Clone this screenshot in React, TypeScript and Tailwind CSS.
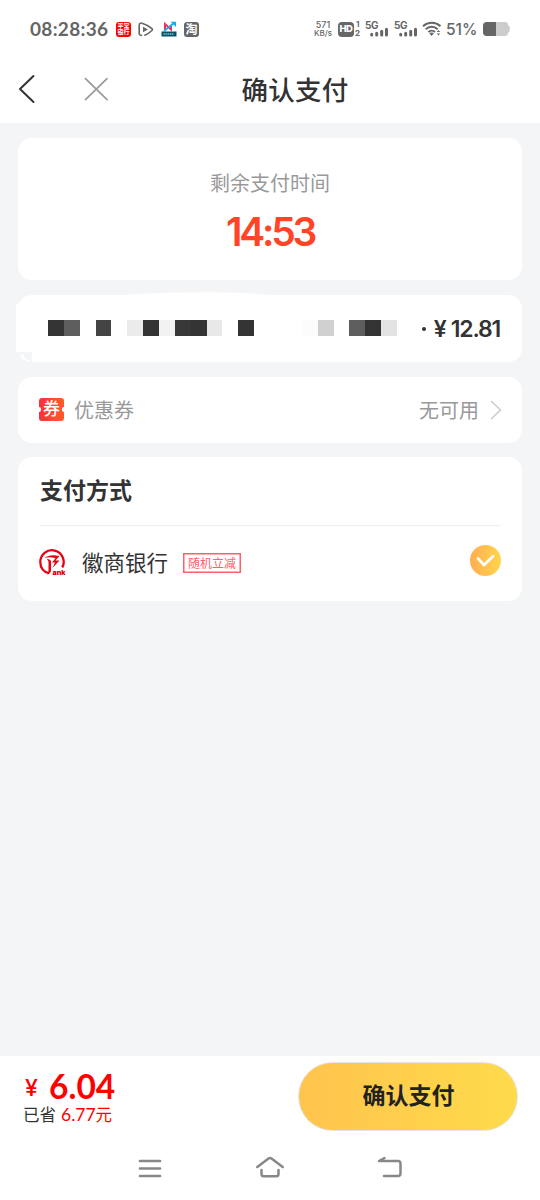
import React from "react";

const mosaic = [
  "bg-[#333333]", "bg-[#5e5e5e]", "", "bg-[#444444]", "", "bg-[#ebebeb]", "bg-[#333333]", "bg-[#f2f2f2]",
  "bg-[#383838]", "bg-[#333333]", "bg-[#e8e8e8]", "", "bg-[#333333]", "", "", "", "bg-[#fcfcfc]",
  "bg-[#d0d0d0]", "", "bg-[#5e5e5e]", "bg-[#333333]", "bg-[#e3e3e3]",
];

function Signal() {
  return (
    <div className="relative h-[18px] w-[24px]">
      <span className="absolute left-0 top-0 text-[10px] font-bold leading-[10px] tracking-[-0.5px]">5G</span>
      <svg className="absolute left-[5px] top-[7px]" width="19" height="10" viewBox="0 0 19 10" stroke="#666" strokeWidth="3" strokeLinecap="round">
        <path d="M1.7 7.3v.7M6.7 6.3V8M11.7 4.3V8M16.5 2.3V8" />
      </svg>
    </div>
  );
}

function StatusBar() {
  return (
    <header className="flex h-[58px] items-center pl-[30px] text-[#666]">
      <span className="w-[86px] whitespace-nowrap font-['Lato',sans-serif] text-[19px] font-bold leading-5 tracking-[0.3px]">08:28:36</span>
      <div className="flex h-[15px] w-[15px] flex-col items-center justify-center rounded-[3px] bg-[#fa0000] text-[6px] font-bold leading-[6px] text-white">
        <span>平常</span><span>银行</span>
      </div>
      <svg className="ml-[7px]" width="16" height="15" viewBox="0 0 16 15" fill="none" stroke="#666" strokeWidth="1.6" strokeLinejoin="round" strokeLinecap="round">
        <path d="M3.5 13.2C1.7 13.5 1.2 12.6 1.2 11V3.2C1.2 1.3 2.4.7 4 1.2c4 1.2 7.8 3.5 9.9 5.4.8.7.7 1.2 0 1.9-1.900 1.800-4.400 3.500-7 4.700" />
        <path d="M5 4.800v5.400L10 7.500z" fill="#666" stroke="none" />
      </svg>
      <svg className="ml-[7px]" width="16" height="16" viewBox="0 0 16 16">
        <path d="M4 9V3l6 5.500V4" fill="none" stroke="#f33059" strokeWidth="2" />
        <path d="M3 10 13 2" stroke="#16aee9" strokeWidth="1.800" />
        <path d="M9.500.8H15V6z" fill="#16aee9" />
        <path d="M.5 10.500h15v5H.5z" fill="#07536b" />
        <path d="M2.500 13h10.500" stroke="#78b7c2" strokeWidth="1.300" strokeDasharray="1.500 .5" />
      </svg>
      <span className="ml-[7px] flex h-[15px] w-[15px] items-center justify-center rounded-[3px] bg-[#666] text-[12px] font-bold leading-none text-white"><span className="relative top-px">淘</span></span>
      <div className="ml-[114px] flex w-[20px] flex-col items-center whitespace-nowrap text-[9px] font-medium leading-[8px]">
        <span>571</span><span className="text-[8px]">KB/s</span>
      </div>
      <div className="ml-[5px] flex h-[15px] w-[16px] items-center justify-center rounded-[4px] bg-[#666] text-[9.5px] font-extrabold leading-none text-white"><span className="tracking-[-0.5px]">HD</span></div>
      <div className="flex w-[6px] flex-col text-[8px] font-bold leading-[9px]"><span className="pl-[2px]">1</span><span className="pl-px">2</span></div>
      <div className="ml-[5px] flex gap-[5px]"><Signal /><Signal /></div>
      <svg className="ml-[4px]" width="20" height="16" viewBox="0 0 20 16" fill="none" stroke="#666" strokeWidth="2">
        <path d="M1 5.200c5-4.500 12.500-4.500 17.500 0M3.700 8.200c3.500-3.300 8.500-3.300 12 0M6.400 11c1.900-1.800 4.700-1.800 6.600 0" />
        <path d="m7.300 12.300 2.300 2.700 2.300-2.700c-1.300-1-3.300-1-4.600 0Z" fill="#666" stroke="none" />
        <path d="m14.800 11 1.700-2 1.700 2zM14.800 12.500h3.400l-1.700 2z" fill="#666" stroke="none" />
      </svg>
      <span className="relative top-px ml-[4px] w-[37px] whitespace-nowrap text-[15.5px] font-medium">51%</span>
      <svg width="28" height="14" viewBox="0 0 28 14">
        <path d="M4 0h18a3 3 0 0 1 3 3l1.700 2v4L25 11a3 3 0 0 1-3 3H4a4 4 0 0 1-4-4V4a4 4 0 0 1 4-4Z" fill="#ccc" />
        <path d="M13 0H4a4 4 0 0 0-4 4v6a4 4 0 0 0 4 4h9Z" fill="#666" />
      </svg>
    </header>
  );
}

function NavBar() {
  return (
    <nav className="relative flex h-[65px] items-center justify-center pl-[50px]">
      <svg className="absolute left-[18px] top-[16px]" width="92" height="30" viewBox="0 0 92 30" fill="none" strokeLinecap="round" strokeLinejoin="round">
        <path d="M15.500 2 2 15l13.500 13" stroke="#333" strokeWidth="2" />
        <path d="m67.500 4.700 21.500 21M89 4.700l-21.500 21" stroke="#999" strokeWidth="1.700" />
      </svg>
      <h1 className="text-[26.5px] font-medium leading-none tracking-[0.2px] text-[#333]">确认支付</h1>
    </nav>
  );
}

function BankLogo() {
  return (
    <svg width="27" height="28" viewBox="0 0 27 28">
      <path d="M10 25.200C5 24.500 1.300 20 1.300 14.200A11.700 11.700 0 1 1 23.300 19.500" fill="none" stroke="#e60012" strokeWidth="2.300" />
      <path d="M5.500 10C9.500 7 14 6.800 20.500 8L16.500 12.500h4L13.500 20l2.500-5.500h-3l3.500-4.300C12.500 9 9 9 5.500 10Z" fill="#e60012" />
      <path d="M7.500 11.500c2.800-.5 4.500.2 4.500 2.500v8c0 2.500-1.500 4-4 4.500 1-1 1.500-2.500 1.500-4.500v-8c0-1.300-.7-2-2-2.500Z" fill="#e60012" />
      <text x="13.500" y="27" fill="#e60012" fontFamily="Inter, sans-serif" fontSize="6.500" fontWeight="900" textLength="13" lengthAdjust="spacingAndGlyphs">ank</text>
    </svg>
  );
}

export default function App() {
  return (
    <div className="flex h-[1200px] w-[540px] flex-col overflow-hidden bg-white font-['Inter','Noto_Sans_CJK_SC',sans-serif]">
      <StatusBar />
      <NavBar />
      <main className="flex flex-1 flex-col bg-[#f4f5f7] px-[18px] pt-[15px]">
        <section className="flex h-[142px] flex-col items-center rounded-[14px] bg-white pt-[34px]">
          <p className="text-[20px] leading-6 text-[#999]">剩余支付时间</p>
          <p className="mt-[15px] text-[39px] font-semibold leading-[42px] tracking-[-3.2px] text-[#ff4526]">14:53</p>
        </section>

        <section className="relative mt-[15px] flex h-[67px] items-center justify-between rounded-[14px] bg-white pl-[30px] pr-[22px]">
          <svg className="absolute left-[-2px] top-[-3px]" width="260" height="70" viewBox="0 0 260 70" fill="#fff">
            <path d="M100 3.500C160-.8 220-.8 260 3.500Z" />
            <path d="M0 12h16v48H0z" />
            <path d="M2 60h14v10H2z" fill="#f4f5f7" />
            <path d="M4 63.500 7 62c1 4 4 6 9 8-5 0-9-2-12-6.500Z" />
          </svg>
          <div className="mb-px grid h-[16px] w-[349px] grid-cols-[repeat(22,minmax(0,1fr))]">
            {mosaic.map((color, i) => <span key={i} className={color} />)}
          </div>
          <div className="flex items-center whitespace-nowrap text-[#333]">
            <span className="mr-[8px] h-[4px] w-[4px] rounded-full bg-[#333]" />
            <span className="mr-[2px] w-[15px] text-[23px] font-semibold leading-6">¥</span>
            <span className="text-[23px] font-semibold leading-6 tracking-[-1.2px]">12.81</span>
          </div>
        </section>

        <section className="mt-[15px] flex h-[66px] items-center rounded-[14px] bg-white pl-[21px] pr-[20px] text-[20px] text-[#999]">
          <div className="relative mb-px flex h-[23px] w-[25px] items-center justify-center overflow-hidden rounded-[3px] bg-linear-to-r from-[#ff2c3c] to-[#ff5a2b] text-[17px] font-medium leading-none text-white">
            <span>券</span>
            <span className="absolute left-[-2px] top-[9px] h-[5px] w-[4px] rounded-full bg-white" />
            <span className="absolute right-[-2px] top-[9px] h-[5px] w-[4px] rounded-full bg-white" />
          </div>
          <span className="ml-[10px] pt-[2px]">优惠券</span>
          <span className="ml-auto pt-[2px]">无可用</span>
          <svg className="ml-[11px]" width="12" height="20" viewBox="0 0 12 20" fill="none" stroke="#ccc" strokeWidth="1.500">
            <path d="m1 1 9.500 9L1 19" />
          </svg>
        </section>

        <section className="mt-[14px] h-[144px] rounded-[14px] bg-white px-[21px]">
          <h2 className="flex h-[69px] items-center border-b border-[#f0f0f0] pl-px text-[23px] font-bold text-[#333]">支付方式</h2>
          <div className="flex h-[72px] items-center">
            <BankLogo />
            <span className="ml-[16px] pt-[2px] text-[21.5px] text-[#333]">徽商银行</span>
            <span className="ml-[15px] mt-[2px] flex h-[20px] w-[58px] items-center justify-center whitespace-nowrap border border-[#ff6068] pt-px text-[12px] leading-none text-[#ff6068] shadow-[inset_0_0_0_0.5px_#ff6068]">随机立减</span>
            <span className="mb-[3px] ml-auto flex h-[31px] w-[31px] items-center justify-center rounded-full bg-linear-to-r from-[#ffae50] to-[#ffd54c]">
              <svg width="19" height="14" viewBox="0 0 19 14" fill="none" stroke="#fff" strokeWidth="2.700" strokeLinecap="round" strokeLinejoin="round">
                <path d="m2 4.500 6 6.500 9-8.700" />
              </svg>
            </span>
          </div>
        </section>
      </main>

      <footer className="h-[144px] bg-white">
        <div className="flex h-[80px] items-start justify-between pl-[23px] pr-[22px]">
          <div className="pt-[15px] text-[#f00]">
            <p className="flex h-[32px] items-center whitespace-nowrap leading-none">
              <span className="ml-[2px] w-[24px] pt-[3px] text-[23px] font-medium">¥</span>
              <span className="font-['Lato',sans-serif] text-[33.5px] font-bold">6.04</span>
            </p>
            <p className="mt-[2px] flex items-center whitespace-nowrap font-['Lato','Noto_Sans_CJK_SC',sans-serif] text-[17.5px] leading-5"><span className="mr-[5px] text-[16.5px] leading-5 text-[#333]">已省</span><span>6.77</span><span className="text-[16.5px] leading-5">元</span></p>
          </div>
          <button className="mt-[6px] h-[69px] w-[220px] rounded-full border border-[#e5e5e8] bg-linear-to-r from-[#ffc44d] to-[#ffdb4b] pl-px text-[23px] font-bold text-[#222]">确认支付</button>
        </div>
        <div className="flex h-[64px] items-center justify-center gap-[92px]">
          <svg width="28" height="24" viewBox="0 0 28 24" fill="none" stroke="#888" strokeWidth="2.700" strokeLinecap="round">
            <path d="M4 5h20M4 12.500h20M4 20h20" />
          </svg>
          <svg width="28" height="24" viewBox="0 0 28 24" fill="none" stroke="#888" strokeWidth="2.500" strokeLinecap="round" strokeLinejoin="round">
            <path d="m1.300 11 11.200-8.500q1.500-1 3 0L26.700 11M5.500 14v4q0 2.300 2.300 2.300h12.400q2.300 0 2.300-2.300v-4" />
          </svg>
          <svg width="28" height="24" viewBox="0 0 28 24" fill="none" stroke="#888" strokeWidth="2.500" strokeLinecap="round" strokeLinejoin="round">
            <path d="M8.500 2 3 5h19q2.500 0 2.500 2.500v10q0 2.500-2.500 2.500H8" />
          </svg>
        </div>
      </footer>
    </div>
  );
}
